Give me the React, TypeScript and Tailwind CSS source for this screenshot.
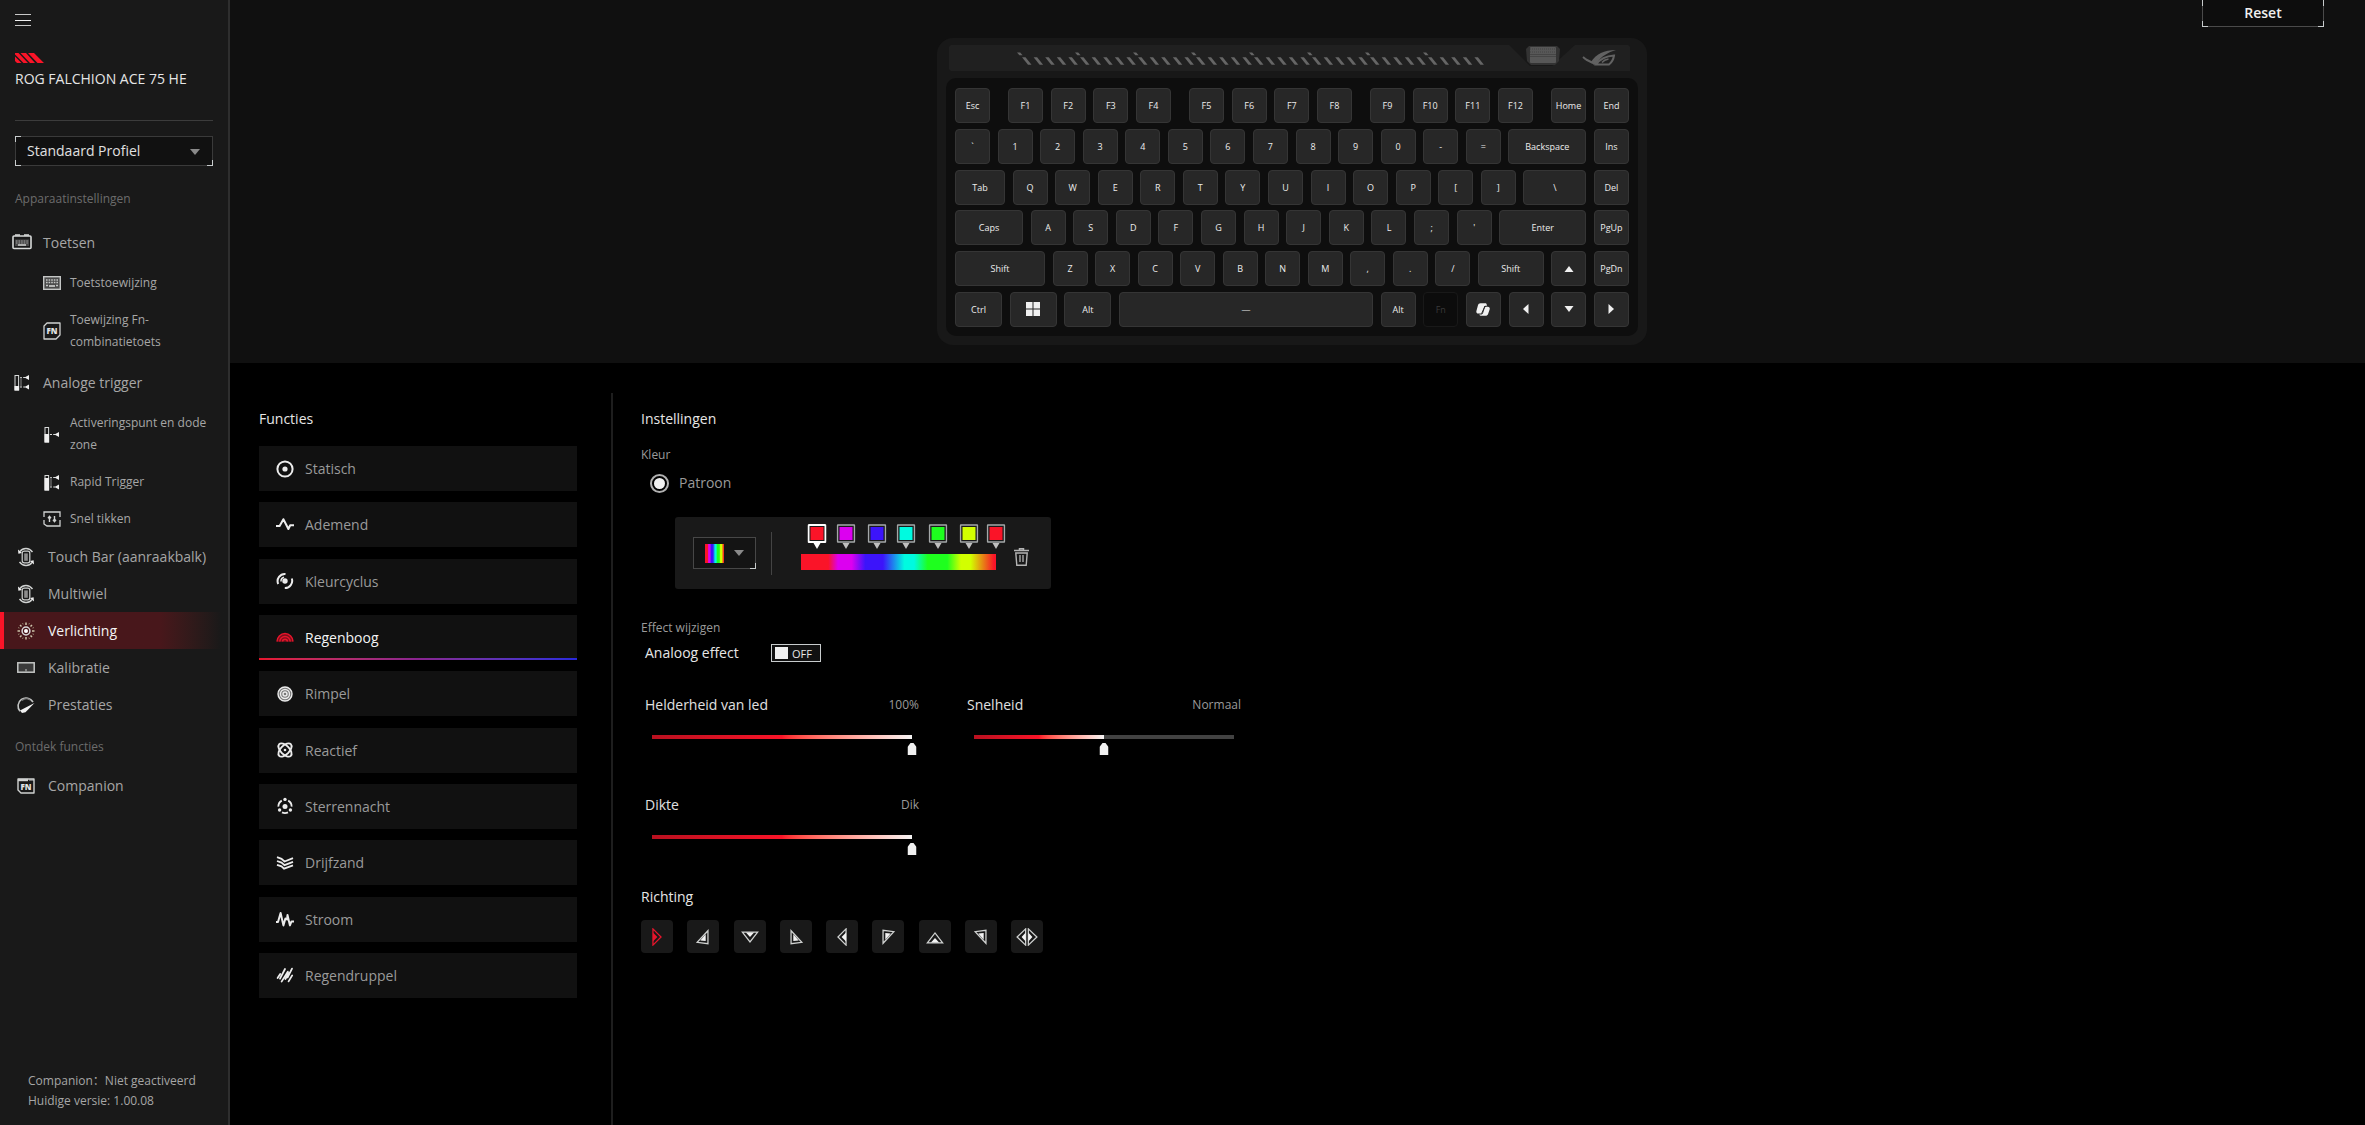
import { useState } from 'react';
import type { ReactNode } from 'react';
import clsx from 'clsx';

type IconProps = { className?: string };

interface NavItem {
  id: string;
  label: string;
  icon: ReactNode;
  children?: NavItem[];
}

interface KeyDef {
  label: ReactNode;
  name?: string;
  width?: string;
  disabled?: boolean;
}

/* ---------- Sidebar icons ---------- */

const KeyboardTopIcon = () => (
  <svg width="20" height="16" viewBox="0 0 20 16" fill="none" stroke="#d8dad9" aria-hidden="true">
    <rect x="1" y="2" width="18" height="12.5" rx="1" strokeWidth="1.6" />
    <path d="M3 1h5M12 1h5" strokeWidth="1.4" />
    <path d="M3 5.500h14v6.500H3z" fill="#4a4a4a" stroke="none" />
    <path d="M4 7h12M4 9h12" strokeDasharray="1.4 1.2" stroke="#a0a0a0" />
    <path d="M6 11h8" strokeWidth="1.4" />
  </svg>
);

const KeyboardIcon = () => (
  <svg width="18" height="14" viewBox="0 0 18 14" fill="none" stroke="#c4c6c5" aria-hidden="true">
    <rect x="0.7" y="0.7" width="16.6" height="12.6" fill="#4a4a4a" strokeWidth="1.4" />
    <path d="M3 4h12M3 6.500h12" strokeDasharray="1.6 1" strokeWidth="1.5" />
    <path d="M3 9.500h2M13 9.500h2" strokeWidth="1.3" />
    <path d="M6 10h6" strokeWidth="1.8" />
  </svg>
);

const FnIcon = () => (
  <svg width="18" height="18" viewBox="0 0 18 18" fill="none" stroke="#d0d2d1" aria-hidden="true">
    <path d="M4 1h13v12l-4 4H1V4z" strokeWidth="1.3" strokeLinejoin="round" />
    <text x="9" y="11.600" textAnchor="middle" fontSize="8" fontWeight="800" fill="#e4e4e4" stroke="none">FN</text>
  </svg>
);

const CompanionIcon = () => (
  <svg width="18" height="16" viewBox="0 0 18 16" fill="none" stroke="#d0d2d1" aria-hidden="true">
    <path d="M1 1h16v14H4l-3-3z" strokeWidth="1.4" strokeLinejoin="round" />
    <path d="M1 2h10" strokeWidth="2.4" />
    <path d="M12 2h5" strokeWidth="1" />
    <text x="9" y="11.800" textAnchor="middle" fontSize="8" fontWeight="800" fill="#e4e4e4" stroke="none">FN</text>
  </svg>
);

const TriggerIcon = ({ full = false }: { full?: boolean }) => (
  <svg width="16" height="17" viewBox="0 0 16 17" fill="none" stroke="#d8dad9" aria-hidden="true">
    <rect x="1" y="1.5" width="3.6" height="14.5" strokeWidth="1" />
    <rect x="0.5" y={full ? 4 : 12} width="4.6" height={full ? 12.5 : 4.5} fill="#f0f0f0" stroke="none" />
    <path d="M6 3.500h5M6 13h5" strokeDasharray="2 1.2" />
    <path d="M7 3v10" stroke="#8b8b8b" />
    <path d="M15 1v5l-4.500-2.500zM15 10.500v5L10.500 13z" fill="#f0f0f0" stroke="none" />
  </svg>
);

const ActuationIcon = () => (
  <svg width="16" height="17" viewBox="0 0 16 17" fill="none" stroke="#d8dad9" aria-hidden="true">
    <rect x="1" y="1.5" width="3.6" height="14.5" strokeWidth="1" />
    <rect x="0.5" y="8" width="4.6" height="8.5" fill="#f0f0f0" stroke="none" />
    <path d="M6 8.500h5" strokeDasharray="2 1.2" />
    <path d="M15 6v5l-4.500-2.500z" fill="#f0f0f0" stroke="none" />
  </svg>
);

const SnapIcon = () => (
  <svg width="18" height="16" viewBox="0 0 18 16" fill="none" stroke="#d0d2d1" aria-hidden="true">
    <path d="M1 6V1h16v5M17 9v6H4l-3-2V9" strokeWidth="1.3" />
    <path d="M6.500 11V5.500M5 7.200l1.500-1.800L8 7.200M11.500 5v5.500M10 8.800l1.500 1.800L13 8.800" strokeWidth="1.4" />
  </svg>
);

const WheelIcon = () => (
  <svg width="18" height="20" viewBox="0 0 18 20" fill="none" stroke="#d0d2d1" aria-hidden="true">
    <rect x="5.2" y="4.2" width="7.6" height="11.6" rx="2" strokeWidth="1.2" />
    <rect x="7.2" y="6.4" width="3.6" height="7.4" fill="#8d8d8d" stroke="none" />
    <path d="M3 4.500C6 .4 12 .4 15.500 5M15 15.500c-3 4.100-9 4.100-12.500-.5" strokeWidth="1.4" />
    <path d="M1 2.600l.4 4.200 3.600-.9zM17 17.400l-.4-4.200-3.600.9z" fill="#f0f0f0" stroke="none" />
  </svg>
);

const LightIcon = () => (
  <svg width="18" height="18" viewBox="0 0 18 18" fill="none" stroke="#cfc6ac" aria-hidden="true">
    <circle cx="9" cy="9" r="3.9" strokeWidth="1.5" stroke="#d8d8d8" />
    <circle cx="9" cy="9" r="2" fill="#fff" stroke="none" />
    <path
      d="M9 .5v2.500M9 15v2.500M.5 9H3M15 9h2.500M3 3l1.500 1.500M13.500 13.500L15 15M15 3l-1.500 1.500M4.500 13.500L3 15"
      strokeWidth="1.500"
    />
    <path
      d="M5.600 1.200l.5 1.200M12.400 1.200l-.5 1.200M5.600 16.800l.5-1.200M12.400 16.800l-.5-1.200M1.200 5.600l1.200.5M16.800 5.600l-1.200.5M1.200 12.400l1.200-.5M16.800 12.400l-1.200-.5"
      strokeWidth="1"
      stroke="#a0977c"
    />
  </svg>
);

const CalibrationIcon = () => (
  <svg width="18" height="11" viewBox="0 0 18 11" fill="#3a3a3a" stroke="#c4c6c5" aria-hidden="true">
    <rect x="0.8" y="0.8" width="16.4" height="9.4" strokeWidth="1.5" />
    <path d="M9 7v2.400" />
  </svg>
);

const PerformanceIcon = () => (
  <svg width="20" height="18" viewBox="0 0 20 18" fill="none" stroke="#c4c6c5" aria-hidden="true">
    <path d="M4 15.200A8 8 0 1 1 17 6" strokeWidth="1.6" />
    <path d="M6 4.500A6.600 6.600 0 0 1 14 4" stroke="#7c7c7c" strokeWidth="1.2" />
    <path d="M18.500 7L4 14.500 6 17l3.500-.8z" fill="#f2f2f2" stroke="none" />
  </svg>
);

/* ---------- Effect icons ---------- */

const StaticIcon = () => (
  <svg width="18" height="18" viewBox="0 0 18 18" fill="none" stroke="currentColor" aria-hidden="true">
    <circle cx="9" cy="9" r="7.6" strokeWidth="2" />
    <circle cx="9" cy="9" r="2.6" fill="currentColor" stroke="none" />
  </svg>
);

const BreathingIcon = () => (
  <svg width="18" height="18" viewBox="0 0 18 18" fill="none" stroke="currentColor" strokeWidth="2" strokeLinejoin="round" aria-hidden="true">
    <path d="M0 10h3.600L7.400 3.200l5 9.800 1.800-3.800H18" />
  </svg>
);

const CycleIcon = () => (
  <svg width="18" height="18" viewBox="0 0 18 18" fill="none" stroke="currentColor" strokeWidth="2" aria-hidden="true">
    <circle cx="9" cy="9" r="2.7" fill="currentColor" stroke="none" />
    <path d="M2.200 12A7.200 7.200 0 0 1 9.500 2M15.800 6.500A7.200 7.200 0 0 1 8.800 16" />
    <path d="M5 9.500A4.200 4.200 0 0 1 8 5.200" strokeWidth="1.500" />
  </svg>
);

const RainbowIcon = () => (
  <svg width="18" height="18" viewBox="0 0 18 18" fill="none" stroke="#e8152c" strokeWidth="1.5" aria-hidden="true">
    <path d="M.9 13.800a8.100 8.100 0 0 1 16.200 0z" fill="#7d0f1b" stroke="none" />
    <path d="M1 13.600a8 8 0 0 1 16 0M3.800 13.600a5.200 5.200 0 0 1 10.400 0M6.600 13.600a2.400 2.400 0 0 1 4.800 0" />
  </svg>
);

const RippleIcon = () => (
  <svg width="18" height="18" viewBox="0 0 18 18" fill="#777" stroke="currentColor" strokeWidth="1.4" aria-hidden="true">
    <circle cx="9" cy="9" r="7" />
    <circle cx="9" cy="9" r="4.500" />
    <circle cx="9" cy="9" r="2" />
  </svg>
);

const ReactiveIcon = () => (
  <svg width="18" height="18" viewBox="0 0 18 18" fill="none" stroke="currentColor" strokeWidth="1.9" aria-hidden="true">
    <ellipse cx="9" cy="9" rx="8.2" ry="4.4" transform="rotate(45 9 9)" />
    <ellipse cx="9" cy="9" rx="8.2" ry="4.4" transform="rotate(-45 9 9)" />
    <circle cx="9" cy="9" r="1.3" fill="currentColor" stroke="none" />
  </svg>
);

const StarryIcon = () => (
  <svg width="18" height="18" viewBox="0 0 18 18" fill="none" stroke="currentColor" strokeWidth="1.8" aria-hidden="true">
    <circle cx="9" cy="9.400" r="2.500" fill="currentColor" stroke="none" />
    <path d="M5.800 3.600A6.600 6.600 0 0 0 2.400 9.600M12.200 3.600a6.600 6.600 0 0 1 3.400 6M6 15.400a6.800 6.800 0 0 0 6 0" />
    <circle cx="9" cy="2.400" r="1.700" fill="currentColor" stroke="none" />
    <circle cx="3.600" cy="13" r="1.700" fill="currentColor" stroke="none" />
    <circle cx="14.400" cy="13" r="1.700" fill="currentColor" stroke="none" />
  </svg>
);

const QuicksandIcon = () => (
  <svg width="18" height="18" viewBox="0 0 18 18" fill="none" stroke="currentColor" strokeWidth="1.8" aria-hidden="true">
    <path d="M1 3.200l4.500 1.600L8.500 7.500 17 4.200M1 7l4.500 1.600 3 2.500L17 7.900M1 10.800l4.500 1.600 2.500 2.200 9-3.200" />
  </svg>
);

const CurrentIcon = () => (
  <svg width="18" height="18" viewBox="0 0 18 18" fill="none" stroke="currentColor" strokeWidth="2" strokeLinejoin="round" aria-hidden="true">
    <path d="M0 12h2L4.600 3l2.800 12.400L9.400 8.500l1.600 1L11.500 5l2.400 10.400 1.600-4H18" />
  </svg>
);

const RaindropIcon = () => (
  <svg width="18" height="18" viewBox="0 0 18 18" fill="none" stroke="currentColor" strokeWidth="1.8" strokeLinecap="round" aria-hidden="true">
    <path d="M1.600 12l2.600-4M4 12.600L9 3M5.600 15.600L11.800 5.600M9.400 13L13 7M11.600 11.400L16 2.600M12.600 15.400l3.600-6" />
  </svg>
);

/* ---------- Data ---------- */

const DEVICE_NAV: NavItem[] = [
  {
    id: 'keys',
    label: 'Toetsen',
    icon: <KeyboardTopIcon />,
    children: [
      { id: 'key-assign', label: 'Toetstoewijzing', icon: <KeyboardIcon /> },
      { id: 'fn-assign', label: 'Toewijzing Fn-combinatietoets', icon: <FnIcon /> },
    ],
  },
  {
    id: 'analog',
    label: 'Analoge trigger',
    icon: <TriggerIcon />,
    children: [
      { id: 'actuation', label: 'Activeringspunt en dode zone', icon: <ActuationIcon /> },
      { id: 'rapid', label: 'Rapid Trigger', icon: <TriggerIcon full /> },
      { id: 'snap', label: 'Snel tikken', icon: <SnapIcon /> },
    ],
  },
];

const MAIN_NAV: NavItem[] = [
  { id: 'touchbar', label: 'Touch Bar (aanraakbalk)', icon: <WheelIcon /> },
  { id: 'multiwheel', label: 'Multiwiel', icon: <WheelIcon /> },
  { id: 'lighting', label: 'Verlichting', icon: <LightIcon /> },
  { id: 'calibration', label: 'Kalibratie', icon: <CalibrationIcon /> },
  { id: 'performance', label: 'Prestaties', icon: <PerformanceIcon /> },
];

const EFFECTS: NavItem[] = [
  { id: 'static', label: 'Statisch', icon: <StaticIcon /> },
  { id: 'breathing', label: 'Ademend', icon: <BreathingIcon /> },
  { id: 'cycle', label: 'Kleurcyclus', icon: <CycleIcon /> },
  { id: 'rainbow', label: 'Regenboog', icon: <RainbowIcon /> },
  { id: 'ripple', label: 'Rimpel', icon: <RippleIcon /> },
  { id: 'reactive', label: 'Reactief', icon: <ReactiveIcon /> },
  { id: 'starry', label: 'Sterrennacht', icon: <StarryIcon /> },
  { id: 'quicksand', label: 'Drijfzand', icon: <QuicksandIcon /> },
  { id: 'current', label: 'Stroom', icon: <CurrentIcon /> },
  { id: 'raindrop', label: 'Regendruppel', icon: <RaindropIcon /> },
];

// `at` is the marker position, `from`/`to` the solid part of the band, all in %
const STOPS = [
  { color: '#fa1428', at: 8, from: 0, to: 14 },
  { color: '#dc00f0', at: 23, from: 19, to: 26 },
  { color: '#3c14fa', at: 39, from: 33, to: 42 },
  { color: '#00fae0', at: 54, from: 53, to: 58 },
  { color: '#1eff1e', at: 70, from: 65, to: 75 },
  { color: '#d2ff00', at: 86, from: 82, to: 87 },
  { color: '#fa1428', at: 100, from: 99, to: 100 },
];

const Arrow = ({ d }: { d: string }) => (
  <svg width="10" height="8" viewBox="0 0 10 8" fill="#f0f0f0" aria-hidden="true">
    <path d={d} />
  </svg>
);

const WindowsLogo = () => (
  <svg width="14" height="14" viewBox="0 0 14 14" fill="#f0f0f0" aria-hidden="true">
    <path d="M0 0h6.500v6.500H0zM7.500 0H14v6.500H7.500zM0 7.500h6.500V14H0zM7.500 7.500H14V14H7.500z" />
  </svg>
);

const CopilotLogo = () => (
  <svg width="14" height="13" viewBox="0 0 14 13" fill="#f0f0f0" aria-hidden="true">
    <path d="M4.500.3h4.800c.8 0 1.200.5 1.400 1.200l.3 1.300h-1c-1 0-1.600.5-1.900 1.400L6.500 9.300c-.3.900-.8 1.300-1.700 1.300H2.300C.8 10.600 0 9.500.4 8L1.900 2.400C2.300 1.100 3.200.3 4.500.3z" />
    <path d="M9.500 12.700H4.700c-.8 0-1.200-.5-1.400-1.100h1.500c1.300 0 2-.6 2.400-1.800l1.600-5.100c.3-.700.700-1 1.400-1h1.500c1.600 0 2.400 1.100 2 2.500l-1.600 4.700c-.400 1.200-1.300 1.800-2.600 1.800z" />
    <path d="M9 3L5.600 10.600" stroke="#272727" strokeWidth="1" />
  </svg>
);

const chars = (list: string): KeyDef[] => list.split(' ').map((label) => ({ label }));

const FUNCTION_ROW: KeyDef[][] = [
  chars('Esc'),
  chars('F1 F2 F3 F4'),
  chars('F5 F6 F7 F8'),
  chars('F9 F10 F11 F12'),
  chars('Home End'),
];

const KEY_ROWS: KeyDef[][] = [
  [...chars('` 1 2 3 4 5 6 7 8 9 0 - ='), { label: 'Backspace', width: 'w-[78px]' }, { label: 'Ins' }],
  [{ label: 'Tab', width: 'w-[50px]' }, ...chars('Q W E R T Y U I O P [ ]'), { label: '\\', width: 'w-[63px]' }, { label: 'Del' }],
  [{ label: 'Caps', width: 'w-[68px]' }, ...chars("A S D F G H J K L ; '"), { label: 'Enter', width: 'w-[87px]' }, { label: 'PgUp' }],
  [
    { label: 'Shift', width: 'w-[90px]' },
    ...chars('Z X C V B N M , . /'),
    { label: 'Shift', width: 'w-[66px]' },
    { label: <Arrow d="M5 1l4.500 6h-9z" />, name: 'Omhoog' },
    { label: 'PgDn' },
  ],
  [
    { label: 'Ctrl', width: 'w-[47px]' },
    { label: <WindowsLogo />, name: 'Windows', width: 'w-[47px]' },
    { label: 'Alt', width: 'w-[47px]' },
    { label: '—', width: 'w-[254px]' },
    { label: 'Alt' },
    { label: 'Fn', disabled: true },
    { label: <CopilotLogo />, name: 'Copilot' },
    { label: <Arrow d="M2 4l5.500-5v10z" />, name: 'Links' },
    { label: <Arrow d="M.5 1h9L5 7z" />, name: 'Omlaag' },
    { label: <Arrow d="M8 4L2.500-1v10z" />, name: 'Rechts' },
  ],
];

/* ---------- Keyboard ---------- */

function Key({ def }: { def: KeyDef }) {
  return (
    <button
      type="button"
      disabled={def.disabled}
      aria-label={def.name}
      className={clsx(
        'flex h-[35px] shrink-0 items-center justify-center rounded border text-[9px] leading-none font-medium [&_svg]:overflow-visible',
        def.width ?? 'w-[35px]',
        def.disabled ? 'border-[#191919] bg-[#0c0c0c] text-[#3a3a3a]' : 'border-[#353535] bg-[#272727] text-[#ececec]',
      )}
    >
      {def.label}
    </button>
  );
}

function TopBar() {
  const dashes = Array.from({ length: 40 }, (_, i) => i);
  return (
    <svg viewBox="0 0 681 26" className="ml-3 block h-[26px] w-[681px]" fill="none" aria-hidden="true">
      <path d="M2 0H560L581 21H603L626 0H679L681 2V26H2L0 24V2z" fill="#202020" />
      {dashes.map((i) => (
        <g key={i} fill="#666">
          <path d={`M${73 + i * 11.6} 12.300h3.500l6 7.400h-3.500z`} />
          {i % 5 === 0 && <path d={`M${68 + i * 11.6} 7.500h3.200l2.400 2.800h-3.200z`} />}
        </g>
      ))}
      {/* multi wheel */}
      <path d="M580 1h28l3 3-1 12-4 4h-24l-4-4-1-12z" fill="#333" />
      <rect x="581" y="2" width="26" height="16" rx="1" fill="#575757" />
      <path d="M581 4h26M581 7h26" stroke="#444" strokeDasharray="1 1" />
      <path d="M581 9.500h26M581 11.500h26" stroke="#454545" />
      {/* eye logo */}
      <path d="M642 17C647 9 655 5 667 5C659 7.500 652 11 648 18.500L645 20z" fill="#626262" />
      <g stroke="#626262" strokeWidth="2">
        <path d="M647 19.500C651 14 657 11 665 10.500C664.500 14 662.500 17.500 660 19.500z" />
        <path d="M653 17.500c1.500-2 3.500-3 6.500-3.500" strokeWidth="1.500" />
        <path d="M634 12l3 2.500M637 14.500l7 3.500" />
      </g>
    </svg>
  );
}

function Keyboard() {
  return (
    <div className="mt-[38px] h-[307px] w-[710px] shrink-0 rounded-2xl bg-[#181818] pt-[7px]">
      <TopBar />
      <div className="mx-[9px] mt-[7px] rounded-[10px] bg-[#0e0e0e] px-[9px] pt-[10px] pb-[9px]">
        <div className="flex h-[239px] flex-col justify-between">
          <div className="flex justify-between">
            {FUNCTION_ROW.map((group, i) => (
              <div
                key={i}
                className={clsx('flex justify-between', group.length === 4 && 'w-[163px]', group.length === 2 && 'w-[78px]')}
              >
                {group.map((def, j) => (
                  <Key key={j} def={def} />
                ))}
              </div>
            ))}
          </div>
          {KEY_ROWS.map((row, i) => (
            <div key={i} className="flex justify-between">
              {row.map((def, j) => (
                <Key key={j} def={def} />
              ))}
            </div>
          ))}
        </div>
      </div>
    </div>
  );
}

/* ---------- Sidebar ---------- */

function Corner({ className }: IconProps) {
  return <span className={clsx('pointer-events-none absolute h-[6px] w-[6px] border-[#c8cccd]', className)} />;
}

function Sidebar() {
  const [active, setActive] = useState('lighting');

  return (
    <aside className="flex w-[230px] shrink-0 flex-col border-r-2 border-[#2e2e2e] bg-[#191919] text-[#a6a6a6]">
      <div className="px-[15px]">
        <button type="button" aria-label="Menu" className="mt-[14px] flex h-3 w-4 flex-col justify-between">
          <span className="h-px w-full bg-[#c8c8c8]" />
          <span className="h-px w-full bg-[#f0f0f0]" />
          <span className="h-px w-full bg-[#c8c8c8]" />
        </button>
        <svg width="29" height="10" viewBox="0 0 29 10" fill="#fa1428" className="mt-[27px] block" aria-hidden="true">
          <path d="M0 3.500L6.500 10H2L0 8zM0 0h3.500l9.500 10H8.500L0 1.500zM5.500 0H11l9 10h-5zM13 0h6l10 10h-6.500z" />
        </svg>
        <h1 className="mt-1 text-[14px] leading-6 text-[#e6e6e6]">ROG FALCHION ACE 75 HE</h1>
        <hr className="mt-[29px] border-[#3c3c3c]" />
        <div className="relative mt-[15px] h-[30px] border border-[#3a3a3a] bg-[#111]">
          <select
            aria-label="Profiel"
            className="h-full w-full appearance-none bg-transparent pl-[11px] text-[14px] leading-none font-medium text-[#e0e0e0] outline-none"
          >
            <option>Standaard Profiel</option>
          </select>
          <svg width="10" height="6" viewBox="0 0 10 6" fill="#8a8a8a" className="pointer-events-none absolute top-3 right-3" aria-hidden="true">
            <path d="M0 0h10L5 6z" />
          </svg>
          <Corner className="-top-px -left-px border-t border-l" />
          <Corner className="-bottom-px -left-px border-b border-l" />
          <Corner className="-right-px -bottom-px border-r border-b" />
        </div>
        <h2 className="mt-[22px] text-[12px] leading-[22px] text-[#6c6c6c]">Apparaatinstellingen</h2>
      </div>

      <nav className="mt-[10px]">
        {DEVICE_NAV.map((group) => (
          <div key={group.id}>
            <button type="button" className="flex h-[44px] w-full items-center gap-[11px] pl-3 text-left text-[14px]">
              <span className="flex w-5 justify-center">{group.icon}</span>
              {group.label}
            </button>
            {group.children?.map((item) => (
              <button
                key={item.id}
                type="button"
                className="flex w-full items-center gap-[9px] pt-2 pb-[7px] pl-[43px] text-left text-[12px] leading-[22px]"
              >
                <span className="flex w-[18px] shrink-0 justify-center">{item.icon}</span>
                <span>{item.label}</span>
              </button>
            ))}
          </div>
        ))}
        <div className="mt-px">
          {MAIN_NAV.map((item) => (
            <button
              key={item.id}
              type="button"
              onClick={() => setActive(item.id)}
              className={clsx(
                'flex h-[37px] w-full items-center gap-3 border-l-4 pl-3 text-left text-[14px] whitespace-nowrap',
                active === item.id
                  ? 'border-[#fa1428] bg-linear-to-r from-[#48171b] from-70% to-[#191919] to-97% text-[#f4f4f4]'
                  : 'border-transparent',
              )}
            >
              <span className="flex w-5 shrink-0 justify-center">{item.icon}</span>
              {item.label}
            </button>
          ))}
        </div>
        <h2 className="mt-[13px] pl-[15px] text-[12px] leading-[22px] text-[#6c6c6c]">Ontdek functies</h2>
        <button type="button" className="mt-[9px] flex h-[37px] w-full items-center gap-3 pl-4 text-left text-[14px]">
          <span className="flex w-5 justify-center">
            <CompanionIcon />
          </span>
          Companion
        </button>
      </nav>

      <footer className="mt-auto pb-[14px] pl-7 text-[12px] leading-5">
        <p>Companion：Niet geactiveerd</p>
        <p>Huidige versie: 1.00.08</p>
      </footer>
    </aside>
  );
}

/* ---------- Settings ---------- */

function PatternEditor() {
  const [selected, setSelected] = useState(0);
  const gradient = `linear-gradient(to right, ${STOPS.map((s) => `${s.color} ${s.from}% ${s.to}%`).join(', ')})`;

  return (
    <div className="mt-[22px] ml-[34px] flex h-[72px] w-[376px] items-center rounded-[3px] bg-[#191919] pl-[18px]">
      <div className="relative flex h-8 w-[63px] items-center gap-[10px] border border-[#474747] bg-[#141414] pl-[11px]">
        <span className="h-[19px] w-[19px]" style={{ background: gradient }} />
        <svg width="10" height="6" viewBox="0 0 10 6" fill="#8a8a8a" aria-hidden="true">
          <path d="M0 0h10L5 6z" />
        </svg>
        <Corner className="-right-px -bottom-px border-r border-b" />
        <select aria-label="Kleurpatroon" className="absolute inset-0 opacity-0">
          <option>Regenboog</option>
        </select>
      </div>
      <span className="ml-[15px] h-[43px] w-px bg-[#444]" />
      <div className="ml-[29px] w-[195px] pb-3">
        <div className="relative h-[30px]">
          {STOPS.map((stop, i) => (
            <button
              key={i}
              type="button"
              aria-label={`Kleur ${i + 1}`}
              onClick={() => setSelected(i)}
              className="absolute top-0 -translate-x-1/2"
              style={{ left: `${stop.at}%` }}
            >
              <svg width="19" height="26" viewBox="0 0 19 26" aria-hidden="true">
                <rect
                  x="1"
                  y="1"
                  width="17"
                  height="17"
                  rx="0.5"
                  fill="#191919"
                  stroke={i === selected ? '#fff' : '#a4a8a9'}
                  strokeWidth={i === selected ? 2 : 1.5}
                />
                <rect x="3" y="3" width="13" height="13" fill={stop.color} />
                <path d="M6 19h7l-3.500 6z" fill={i === selected ? '#fff' : '#c0c0c0'} />
              </svg>
            </button>
          ))}
        </div>
        <div className="h-4" style={{ background: gradient }} />
      </div>
      <button type="button" aria-label="Verwijderen" className="mt-2 ml-[18px]">
        <svg width="15" height="18" viewBox="0 0 15 18" fill="none" stroke="#b4b4b4" aria-hidden="true">
          <path d="M0 2.500h15M5.500 2V.7h4V2" strokeWidth="1.5" />
          <path d="M1.800 5l1 12.200h9.400l1-12.200z" strokeWidth="1.4" />
          <path d="M6 7v7M9 7v7" strokeWidth="1.3" />
        </svg>
      </button>
    </div>
  );
}

interface SliderProps {
  id: string;
  label: string;
  valueText: string;
  initial: number;
}

function Slider({ id, label, valueText, initial }: SliderProps) {
  const [value, setValue] = useState(initial);

  return (
    <div className="w-[274px]">
      <div className="flex items-center justify-between leading-6">
        <label htmlFor={id} className="text-[14px] text-[#e0e0e0]">{label}</label>
        <span className="text-[12px] text-[#9a9a9a]">{valueText}</span>
      </div>
      <div className="relative mx-[7px] mt-[18px] h-5">
        <div className="h-1 bg-[#424242]">
          <div
            className="h-full bg-linear-to-r from-[#b9101f] via-[#fa1428] via-50% to-[#f4f4f4]"
            style={{ width: `${value}%` }}
          />
        </div>
        <svg
          width="9"
          height="12"
          viewBox="0 0 9 12"
          fill="#f0f0f0"
          className="absolute top-2 -translate-x-1/2"
          style={{ left: `${value}%` }}
          aria-hidden="true"
        >
          <path d="M0 4l3-4h3l3 4v8H0z" />
        </svg>
        <input
          id={id}
          type="range"
          min={0}
          max={100}
          value={value}
          onChange={(e) => setValue(Number(e.target.value))}
          className="absolute inset-0 w-full cursor-pointer opacity-0"
        />
      </div>
    </div>
  );
}

// Outlined triangle with a small solid one inside
const DIRECTIONS = [
  { name: 'Rechts', outer: 'M5.500 1v18l9-9z', inner: 'M5.500 5v10l5-5z' },
  { name: 'Rechtsboven', outer: 'M15.500 3v14.500L3.500 16z', inner: 'M13 7v7.500L7 14z' },
  { name: 'Omlaag', outer: 'M1.500 4.500h17L10 15.500z', inner: 'M5.500 5h9L10 10z' },
  { name: 'Linksboven', outer: 'M4.500 3v14.500l12-1.500z', inner: 'M7 7v7.500l6-.5z' },
  { name: 'Links', outer: 'M14.500 1v18l-9-9z', inner: 'M14.500 5v10l-5-5z' },
  { name: 'Linksonder', outer: 'M4.500 17V2.500l12 1.500z', inner: 'M7 13V5.500l6 .5z' },
  { name: 'Omhoog', outer: 'M1.500 16.500h17L10 5.500z', inner: 'M5.500 16h9L10 11z' },
  { name: 'Rechtsonder', outer: 'M15.500 17V2.500L3.500 4z', inner: 'M13 13V5.500L7 6z' },
];

function Directions() {
  const [active, setActive] = useState(0);
  return (
    <div className="mt-[11px] flex w-[402px] justify-between">
      {DIRECTIONS.map((dir, i) => (
        <button
          key={dir.name}
          type="button"
          aria-label={dir.name}
          onClick={() => setActive(i)}
          className={clsx(
            'flex h-[33px] w-8 items-center justify-center rounded bg-[#191919]',
            i === active ? 'text-[#e8152c]' : 'text-[#d0d2d1]',
          )}
        >
          <svg width="18" height="18" viewBox="0 0 20 20" fill="none" stroke="currentColor" strokeWidth="1.4" aria-hidden="true">
            <path d={dir.outer} />
            <path d={dir.inner} fill={i === active ? '#e8152c' : '#f4f4f4'} stroke="none" />
          </svg>
        </button>
      ))}
      <button
        type="button"
        aria-label="Beide kanten"
        className="flex h-[33px] w-8 items-center justify-center rounded bg-[#191919] text-[#d0d2d1]"
      >
        <svg width="22" height="18" viewBox="0 0 24 20" fill="none" stroke="currentColor" strokeWidth="1.4" aria-hidden="true">
          <path d="M10.500 1v18L1 10zM13.500 1v18l9.500-9z" />
          <path d="M10.500 5v10L6 10zM13.500 5v10l4.500-5z" fill="#f4f4f4" stroke="none" />
        </svg>
      </button>
    </div>
  );
}

function Settings() {
  const [analog, setAnalog] = useState(false);

  return (
    <section className="mt-[30px] flex-1 border-l-2 border-[#1e1e1e] pt-[14px] pl-[28px]">
      <h2 className="text-[14px] leading-6 text-[#e6e6e6]">Instellingen</h2>
      <h3 className="mt-[13px] text-[12px] leading-[22px] text-[#9a9a9a]">Kleur</h3>
      <label className="mt-[5px] ml-[9px] flex items-center gap-[10px] text-[14px] leading-6 text-[#9a9a9a]">
        <input
          type="radio"
          name="color-mode"
          defaultChecked
          className="h-[19px] w-[19px] appearance-none rounded-full border-2 border-[#b0b0b0] bg-[#f0f0f0] bg-clip-content p-[2px]"
        />
        Patroon
      </label>
      <PatternEditor />

      <h3 className="mt-7 text-[12px] leading-[22px] text-[#9a9a9a]">Effect wijzigen</h3>
      <div className="mt-[2px] ml-1 flex items-center">
        <span id="analog-label" className="w-[126px] text-[14px] leading-6 text-[#e6e6e6]">Analoog effect</span>
        <button
          type="button"
          role="switch"
          aria-checked={analog}
          aria-labelledby="analog-label"
          onClick={() => setAnalog(!analog)}
          className={clsx(
            'flex h-[18px] w-[50px] items-center gap-1 border border-[#c8cccd] bg-[#111] px-[3px] text-[11px] leading-none text-[#e6e6e6]',
            analog && 'flex-row-reverse',
          )}
        >
          <span className="h-3 w-[13px] bg-[#f0f0f0]" />
          {analog ? 'ON' : 'OFF'}
        </button>
      </div>

      <div className="mt-[28px] ml-1 grid w-[596px] grid-cols-2 gap-y-[38px]">
        <Slider id="brightness" label="Helderheid van led" valueText="100%" initial={100} />
        <div className="pl-6">
          <Slider id="speed" label="Snelheid" valueText="Normaal" initial={50} />
        </div>
        <Slider id="thickness" label="Dikte" valueText="Dik" initial={100} />
      </div>

      <h3 className="mt-[30px] text-[14px] leading-6 text-[#e6e6e6]">Richting</h3>
      <Directions />
    </section>
  );
}

function EffectList() {
  const [active, setActive] = useState('rainbow');

  return (
    <section className="w-[381px] shrink-0 pt-[44px] pl-[29px]">
      <h2 className="text-[14px] leading-6 text-[#e6e6e6]">Functies</h2>
      <div className="mt-[15px] flex h-[552px] w-[318px] flex-col justify-between">
        {EFFECTS.map((effect) => (
          <button
            key={effect.id}
            type="button"
            onClick={() => setActive(effect.id)}
            className={clsx(
              'relative flex h-[45px] items-center gap-[11px] bg-[#111] pl-[17px] text-left text-[14px]',
              active === effect.id ? 'text-[#f4f4f4]' : 'text-[#9a9a9a]',
            )}
          >
            <span className="text-[#ececec]">{effect.icon}</span>
            {effect.label}
            {active === effect.id && (
              <span className="absolute inset-x-0 bottom-0 h-[2px] bg-linear-to-r from-[#e8152c] via-[#8a2390] via-50% to-[#2828dc]" />
            )}
          </button>
        ))}
      </div>
    </section>
  );
}

export default function App() {
  return (
    <div className="flex min-h-screen bg-black font-['Open_Sans','Noto_Sans_CJK_SC',sans-serif]">
      <Sidebar />
      <main className="flex flex-1 flex-col">
        <header className="relative flex h-[363px] justify-center bg-[#101010] pr-[11px]">
          <Keyboard />
          <button
            type="button"
            className="absolute top-0 right-[41px] h-[27px] w-[122px] border-x border-b border-[#4a4a4a] bg-[#0d0d0d] text-[14px] leading-none font-semibold text-[#f0f0f0]"
          >
            Reset
            <Corner className="top-0 -left-px border-l" />
            <Corner className="top-0 -right-px border-r" />
            <Corner className="-bottom-px -left-px border-b border-l" />
            <Corner className="-right-px -bottom-px border-r border-b" />
          </button>
        </header>
        <div className="flex flex-1">
          <EffectList />
          <Settings />
        </div>
      </main>
    </div>
  );
}
